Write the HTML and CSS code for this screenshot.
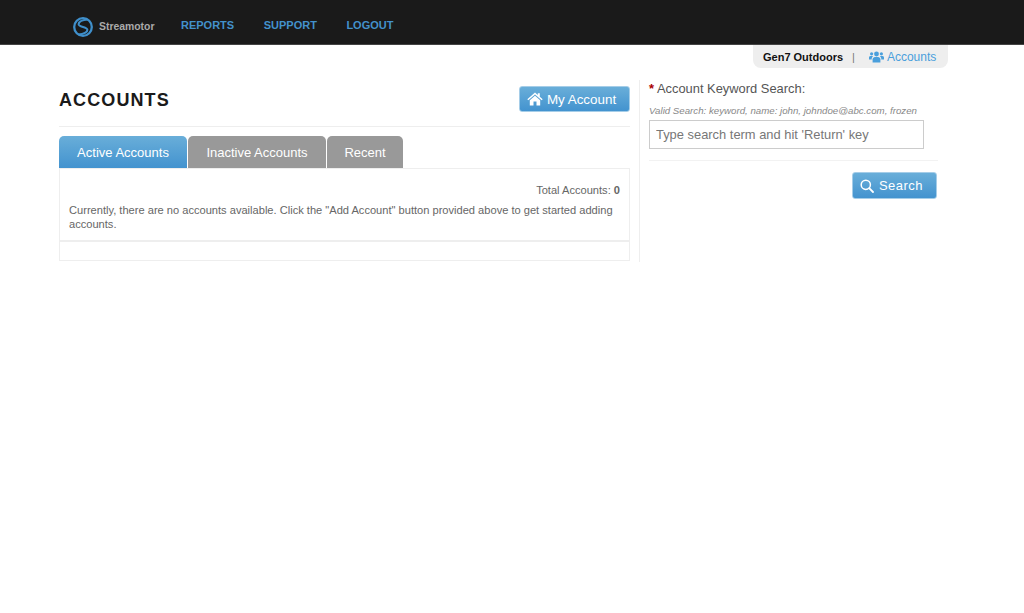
FILE: index.html

```html
<!DOCTYPE html>
<html lang="en">
<head>
    <meta charset="UTF-8">
    <title>Streamotor - Accounts</title>
    <link rel="stylesheet" href="styles.css">
</head>
<body>
    <div class="topbar">
        <div class="logo">
            <svg width="20" height="20" viewBox="0 0 20 20" fill="none">
                <circle cx="10" cy="10" r="8.8" stroke="#3f8fcb" stroke-width="2.3"/>
                <path d="M14.5 2.5C10 3 5.6 4.2 5.6 7.2C5.6 10.2 14.4 9.8 14.4 12.8C14.4 15.8 10 17 5.5 17.5" stroke="#3f8fcb" stroke-width="2"/>
            </svg>
            <span>Streamotor</span>
        </div>
        <a class="nav-link" href="#">REPORTS</a>
        <a class="nav-link" href="#">SUPPORT</a>
        <a class="nav-link" href="#">LOGOUT</a>
    </div>

    <div class="subbar">
        <div class="company">
            <b>Gen7 Outdoors</b>
            <span class="sep">|</span>
            <a href="#">
                <svg width="15" height="12" viewBox="0 0 15 12" fill="#4a9fdc">
                    <circle cx="7.5" cy="3" r="2.4"/>
                    <circle cx="2.6" cy="2.8" r="1.6"/>
                    <circle cx="12.4" cy="2.8" r="1.6"/>
                    <path d="M3.6 11.5V8.2C3.6 6.6 5 6 7.5 6C10 6 11.4 6.6 11.4 8.2V11.5Z"/>
                    <path d="M0 8.6V6.6C0 5.4 1 5 2.6 5C3.2 5 3.7 5.1 4.1 5.3C3.2 5.9 2.7 6.8 2.7 8.6Z"/>
                    <path d="M15 8.6V6.6C15 5.4 14 5 12.4 5C11.8 5 11.3 5.1 10.9 5.3C11.8 5.9 12.3 6.8 12.3 8.6Z"/>
                </svg>
                Accounts
            </a>
        </div>
    </div>

    <div class="content">
        <div class="main">
            <div class="title-row">
                <h1>ACCOUNTS</h1>
                <a class="btn btn-account" href="#">
                    <svg width="16" height="14" viewBox="0 0 16 14" fill="#fff">
                        <path d="M8 0.5L0.3 7.2L1.3 8.3L8 2.5L14.7 8.3L15.7 7.2L12.8 4.7V1.2H10.8V3L8 0.5Z"/>
                        <path d="M8 3.7L2.8 8.2V13.5H6.5V9.6H9.5V13.5H13.2V8.2Z"/>
                    </svg>
                    My Account
                </a>
            </div>

            <div class="tabs">
                <a class="tab active" href="#">Active Accounts</a>
                <a class="tab tab-inactive" href="#">Inactive Accounts</a>
                <a class="tab tab-recent" href="#">Recent</a>
            </div>
            <div class="panel">
                <div class="total">Total Accounts: <b>0</b></div>
                <p>Currently, there are no accounts available. Click the "Add Account" button provided above to get started adding accounts.</p>
            </div>
            <div class="panel-foot"></div>
        </div>

        <div class="side">
            <label class="search-label"><span class="req">*</span> Account Keyword Search:</label>
            <div class="hint">Valid Search: keyword, name: john, johndoe@abc.com, frozen</div>
            <input class="search-input" type="text" placeholder="Type search term and hit 'Return' key">
            <div class="search-actions">
                <a class="btn btn-search" href="#">
                    <svg width="14" height="14" viewBox="0 0 14 14" fill="none" stroke="#fff" stroke-width="1.5">
                        <circle cx="5.8" cy="5.8" r="4.6"/>
                        <path d="M9.2 9.2L13 13" stroke-linecap="round" stroke-width="1.8"/>
                    </svg>
                    Search
                </a>
            </div>
        </div>
    </div>
</body>
</html>
```

FILE: styles.css

```css
* { box-sizing: border-box; }
body { margin: 0; background: #fff; font-family: "Liberation Sans", Arial, sans-serif; color: #666; }
a { text-decoration: none; }

.topbar { display: flex; align-items: center; height: 45px; padding: 5px 0 0 73px; background: #1a1a1a; border-bottom: 1px solid #444; }
.logo { display: flex; align-items: center; gap: 6px; width: 108px; margin-top: 4px; color: #aaa; font-size: 10.4px; font-weight: bold; }
.nav-link { margin-right: 29.5px; color: #4391cb; font-size: 11px; font-weight: bold; }

.subbar { display: flex; justify-content: flex-end; padding-right: 76px; }
.company { display: flex; align-items: center; width: 195px; height: 23px; padding-left: 10px; background: #eee; border-radius: 0 0 8px 8px; font-size: 11px; }
.company b { color: #111; }
.company .sep { margin: 0 14px 0 9px; color: #777; }
.company a { display: flex; align-items: center; gap: 3px; color: #4a9fdc; font-size: 12px; }

.content { display: flex; align-items: flex-start; padding: 12px 0 0 59px; }
.main { width: 571px; }
.title-row { display: flex; align-items: center; justify-content: space-between; height: 47px; padding-bottom: 8px; border-bottom: 1px solid #eee; }
h1 { margin: 2px 0 0; color: #1a1a1a; font-size: 18px; letter-spacing: 1.1px; }

.btn { display: flex; align-items: center; justify-content: center; color: #fff; background: linear-gradient(#69aed9, #4393cf); border: 1px solid #a5cde8; border-radius: 3px; font-size: 13px; }
.btn-account { gap: 4px; width: 111px; height: 26px; padding-right: 6px; font-size: 13.4px; }
.btn-search { gap: 5px; width: 85px; height: 27px; padding-right: 6px; letter-spacing: 0.5px; }

.tabs { display: flex; gap: 1px; margin-top: 9px; }
.tab { display: flex; align-items: center; justify-content: center; height: 32px; color: #fff; background: #999; border-radius: 5px 5px 0 0; font-size: 13px; }
.active { width: 128px; background: linear-gradient(#69aed9, #4393cf); }
.tab-inactive { width: 138px; }
.tab-recent { width: 76px; }

.panel { height: 74px; padding: 14px 9px 0; border: 1px solid #eee; border-bottom-width: 2px; font-size: 11.1px; line-height: 14px; }
.total { text-align: right; }
.panel p { margin: 6px 0 0; }
.panel-foot { height: 19px; border: 1px solid #eee; border-top: 0; }

.side { width: 299px; height: 182px; margin-left: 9px; padding-left: 9px; border-left: 1px solid #eee; }
.search-label { display: block; margin-top: 1px; color: #555; font-size: 12.9px; line-height: 15px; }
.req { color: #a00; font-weight: bold; }
.hint { margin-top: 9px; color: #888; font-size: 9.7px; font-style: italic; line-height: 12px; }
.search-input { display: block; width: 275px; height: 29px; margin-top: 3px; padding: 0 6px; border: 1px solid #ccc; font-family: inherit; font-size: 12.9px; }
.search-input::placeholder { color: #777; opacity: 1; }
.search-actions { display: flex; justify-content: flex-end; margin-top: 11px; padding: 11px 1px 0 0; border-top: 1px solid #f2f2f2; }
```
